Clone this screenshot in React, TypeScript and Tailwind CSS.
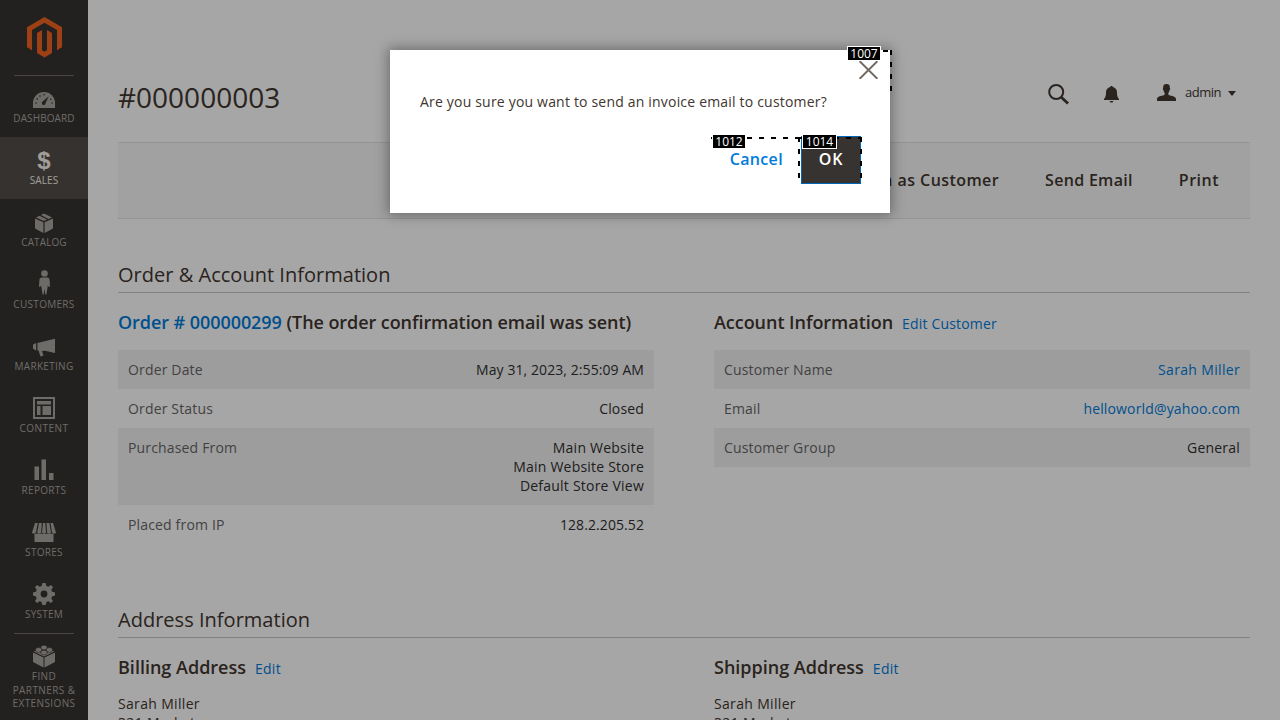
import type { ReactNode } from "react";

const iconBase = "fill-current";

const Dashboard = () => (
  <svg className={iconBase} width="22" height="16" viewBox="0 0 22 16">
    <path d="M0 16V11a11 11 0 0 1 22 0V16Z" />
    <g className="fill-[#373330]">
      <path d="M15.800 4.200 12.600 10.800A1.900 1.900 0 1 1 9.700 9.500Z" />
      <circle cx="3" cy="11" r=".8" /><circle cx="4.2" cy="6.900" r=".8" /><circle cx="7" cy="4" r=".8" />
      <circle cx="11" cy="2.800" r=".8" /><circle cx="17.800" cy="7.200" r=".8" /><circle cx="19" cy="11" r=".8" />
    </g>
  </svg>
);
const Catalog = () => (
  <svg className={iconBase} width="18" height="20" viewBox="0 0 18 20">
    <path d="M0 5.600 8.400 9.300V20L0 15.600ZM18 5.600 9.600 9.300V20L18 15.600ZM1 4.400 4.500 2.700 12 6.600 9 8ZM6 2 9 .5 17 4.400 13.500 5.900Z" />
  </svg>
);
const Person = () => (
  <svg className={iconBase} width="11" height="25" viewBox="0 0 11 25">
    <circle cx="5.500" cy="3.500" r="3.300" />
    <path d="M2.800 7.500h5.400c1.600 0 2.200 1 2.400 2.800l.4 5.700c0 1.200-1 1.500-1.500.6L8.900 15 7.500 24c-.2 1-1.100 1-1.200 0L5.500 19l-.8 5c-.1 1-1 1-1.200 0L2.100 15l-.6 1.600C1 17.500 0 17.200 0 16l.4-5.700C.6 8.500 1.200 7.500 2.800 7.500Z" />
  </svg>
);
const Marketing = () => (
  <svg className={iconBase} width="22" height="19" viewBox="0 0 22 19">
    <path d="M4.500 5 22 .8V15L12 12.800 9 13l1.500 4.500L7.500 18.500 5.500 12.500h-1ZM0 6.500 3.200 5v7.500L0 10.800Z" />
  </svg>
);
const Content = () => (
  <svg className={iconBase} width="22" height="22" viewBox="0 0 22 22">
    <path fillRule="evenodd" d="M0 0h22v22H0ZM2 2v18h18V2ZM4 4h14v3.500H4ZM4 9h3.500v9H4ZM9.500 9H18v9H9.500Z" />
  </svg>
);
const Reports = () => (
  <svg className={iconBase} width="20" height="21" viewBox="0 0 20 21">
    <path d="M.5 7.500H5V21H.5ZM7.500.5H12V21H7.500ZM15 14h4.500v7H15Z" />
  </svg>
);
const Stores = () => (
  <svg className={iconBase} width="24" height="19" viewBox="0 0 24 19">
    <path d="M3 0h2.800L4 9.500a2.200 2.200 0 0 1-4 0ZM7 0h2.800L9.200 9.500a2.200 2.200 0 0 1-4 0ZM11 0h2.300l.7 9.500a2.200 2.200 0 0 1-4 0ZM14.500 0h2.800l1.700 9.500a2.200 2.200 0 0 1-4 0ZM18.500 0H21l3 9.500a2.200 2.200 0 0 1-4 0ZM2.500 11q1.200 0 2.200-.6 2.200 1.200 4.800 0 2.500 1.200 5 0 2.400 1.200 4.800 0 1 .6 2.200.6v8h-19Z" />
  </svg>
);
const Gear = () => (
  <svg className={iconBase} width="22" height="22" viewBox="0 0 22 22">
    <path fillRule="evenodd" d="M9.400 0h3.200l.8 3 2 .8L18 2.100 20 4.200 18.300 6.700l.8 2 2.900.7v3.200l-2.900.8-.8 2 1.700 2.500-2.100 2.100-2.500-1.700-2 .8-.8 2.900H9.400l-.8-2.900-2-.8L4.100 20 2 17.900l1.700-2.500-.8-2L0 12.600V9.400l2.900-.7.800-2L2 4.200 4.100 2.100l2.500 1.700 2-.8ZM11 7.600a3.400 3.400 0 1 0 0 6.800 3.400 3.400 0 0 0 0-6.800Z" />
  </svg>
);
const Brick = () => (
  <svg className={iconBase} width="22" height="23" viewBox="0 0 22 23">
    <path d="M0 7.500l10.500 5V22.500L0 17ZM22 7.500l-10.500 5V22.500L22 17ZM.8 6.500 3 5.400 11 9.200 19 5.400l2.200 1.100L11 11.400Z" />
    <g className="stroke-[#373330]" strokeWidth=".6">
      <path d="M8 1.800a3 1.600 0 0 1 6 0v1.500a3 1.600 0 0 1-6 0Z" />
      <path d="M2.600 4.200a3 1.600 0 0 1 6 0v1.500a3 1.600 0 0 1-6 0Z" />
      <path d="M13.400 4.200a3 1.600 0 0 1 6 0v1.500a3 1.600 0 0 1-6 0Z" />
      <path d="M8 6.800a3 1.600 0 0 1 6 0v1.500a3 1.600 0 0 1-6 0Z" />
    </g>
  </svg>
);

const menu: { label: string; icon: ReactNode; active?: boolean; pad?: string; tracking?: string }[] = [
  { label: "DASHBOARD", icon: <Dashboard />, pad: "pt-[14px]", tracking: "tracking-[0.1px]" },
  { label: "SALES", icon: <span className="font-['Liberation_Sans',sans-serif] text-[24px] leading-[24px] font-bold">$</span>, active: true, tracking: "tracking-[0.1px]" },
  { label: "CATALOG", icon: <Catalog />, pad: "pt-[11px]", tracking: "tracking-[0.1px]" },
  { label: "CUSTOMERS", icon: <Person />, pad: "pt-[6px]" },
  { label: "MARKETING", icon: <Marketing /> },
  { label: "CONTENT", icon: <Content />, pad: "pt-[9px]", tracking: "tracking-[0.5px]" },
  { label: "REPORTS", icon: <Reports />, pad: "pt-[9px]" },
  { label: "STORES", icon: <Stores />, pad: "pt-[11px]" },
  { label: "SYSTEM", icon: <Gear />, pad: "pt-[10px]", tracking: "tracking-[0.2px]" },
];

function Sidebar() {
  return (
    <nav className="flex w-[88px] shrink-0 flex-col bg-[#373330] text-[#aaa6a0]">
      <div className="mx-[14px] flex h-[76px] shrink-0 justify-center border-b border-[#736963] pt-[17px]">
        <svg width="35" height="41" viewBox="0 0 35 41" className="fill-[#f26322]">
          <path d="M17.500 0 35 10.200V30.300L30 33.200V13L17.500 5.800 5 13V33.200L0 30.300V10.200Z" />
          <path d="M10 15.900 15 13V33.200L17.500 34.700 20 33.200V13L25 15.900V36.100L17.500 40.500 10 36.100Z" />
        </svg>
      </div>
      <div className="-mt-px">
        {menu.map((m) => (
          <div
            key={m.label}
            className={`flex h-[62px] flex-col items-center ${m.active ? "bg-[#524d49] text-[#f7f3eb]" : ""}`}
          >
            <div className={`flex h-[36px] shrink-0 items-center justify-center ${m.pad ?? "pt-[12px]"}`}>{m.icon}</div>
            <span className={`text-[10px] leading-[14px] ${m.tracking ?? "tracking-[0.3px]"}`}>{m.label}</span>
          </div>
        ))}
      </div>
      <div className="mx-[10px] -mt-px flex flex-col items-center pt-px">
        <div className="h-px w-[60px] bg-[#736963]" />
        <div className="pt-[11px]"><Brick /></div>
        <span className="mt-[2px] text-center text-[10px] leading-[13.500px] tracking-[0.4px]">
          FIND<br />PARTNERS &amp;<br />EXTENSIONS
        </span>
      </div>
    </nav>
  );
}

function Row({ label, shaded, link, lines, tracking = "tracking-[0.15px]" }: { label: string; shaded?: boolean; link?: boolean; lines: string[]; tracking?: string }) {
  return (
    <div className={`flex justify-between px-[10px] py-[10px] text-[14px] leading-[19px] ${shaded ? "bg-[#f2f2f2]" : ""}`}>
      <span className="tracking-[0.160px] text-[#666666]">{label}</span>
      <span className={`text-right ${tracking} ${link ? "text-[#007bdb]" : "text-[#303030]"}`}>
        {lines.map((l) => <div key={l}>{l}</div>)}
      </span>
    </div>
  );
}

function SectionTitle({ children }: { children: ReactNode }) {
  return <h2 className="h-[35px] border-b border-[#c8c6c2] text-[20px] leading-[34px] tracking-[0.020px] text-[#41362f]">{children}</h2>;
}

function Address({ title }: { title: string }) {
  return (
    <div className="flex-1">
      <div className="flex h-[24px] items-baseline leading-[24px]">
        <h3 className="text-[18px] font-semibold text-[#41362f]">{title}</h3>
        <span className="ml-[9px] text-[14px] tracking-[0.25px] text-[#007bdb]">Edit</span>
      </div>
      <div className="mt-[15px] text-[14px] leading-[19px] tracking-[0.33px] text-[#41362f]">
        Sarah Miller<br />321 Market
      </div>
    </div>
  );
}

function Modal() {
  return (
    <div className="absolute top-[50px] left-[390px] h-[163px] w-[500px] bg-white px-[30px] text-[#41362f] shadow-[0_0_12px_2px_rgba(0,0,0,0.35)]">
      <p className="pt-[42px] text-[14px] leading-[20px] tracking-[0.19px]">Are you sure you want to send an invoice email to customer?</p>
      <div className="mt-[24px] flex justify-end">
        <button className="h-[48px] pr-[18px] pb-[2px] text-[16px] font-semibold tracking-[0.36px] text-[#007bdb]">Cancel</button>
        <button className="mr-[-1px] h-[48px] w-[60px] border border-[#0067b8] bg-[#373330] pb-[2px] text-[16px] font-semibold tracking-[0.8px] text-white">OK</button>
      </div>
      <svg className="absolute top-[11px] left-[469px]" width="19" height="18" viewBox="0 0 19 18">
        <path d="M.6.2 18.400 17.800M18.400.2.6 17.800" className="stroke-[#736963]" strokeWidth="2" />
      </svg>
      <svg className="pointer-events-none absolute top-[-10px] left-[310px]" width="195" height="160" viewBox="0 0 195 160" fill="none">
        <g className="stroke-black" strokeWidth="2" strokeDasharray="5 7">
          <path d="M183 11H188M190 11H192" />
          <path d="M191 10V52" />
          <path d="M11 98H12M47 98H98" />
          <path d="M98 98H162" />
          <path d="M99 97V139" />
          <path d="M161 97V139" />
        </g>
      </svg>
      <span className="absolute top-[-4px] left-[457px] h-[15px] w-[34px] border border-white bg-black text-center text-[12px] leading-[13px] text-white">1007</span>
      <span className="absolute top-[84px] left-[322px] h-[15px] w-[34px] border border-white bg-black text-center text-[12px] leading-[13px] text-white">1012</span>
      <span className="absolute top-[84px] left-[412px] h-[15px] w-[35px] border border-white bg-black text-center text-[12px] leading-[13px] text-white">1014</span>
    </div>
  );
}

export default function App() {
  return (
    <div className="relative flex h-[720px] w-[1280px] overflow-hidden bg-white font-['Open_Sans',sans-serif]">
      <Sidebar />
      <main className="flex-1 px-[30px] pt-[71px]">
        <header className="flex h-[71px] justify-between text-[#41362f]">
          <h1 className="text-[28px] leading-[52px]">#000000003</h1>
          <div className="flex pr-[14px]">
            <svg className="mt-[13px]" width="21" height="21" viewBox="0 0 21 21" fill="none" stroke="currentColor">
              <circle cx="8.200" cy="8" r="7" strokeWidth="2" /><path d="M13 13l7 6.500" strokeWidth="2.800" />
            </svg>
            <svg className="mt-[15px] ml-[35px] fill-current" width="15" height="17" viewBox="0 0 15 17">
              <path d="M7.500 0c.8 0 1.300.5 1.300 1.100 2.800.6 4.200 2.600 4.200 5.500 0 3.200.5 4.900 2 6.400V14H0v-1c1.500-1.500 2-3.200 2-6.400 0-2.900 1.400-4.900 4.200-5.500C6.200.5 6.700 0 7.500 0ZM5.600 15h3.800c-.3 2-3.500 2-3.800 0Z" />
            </svg>
            <svg className="mt-[13px] ml-[38px] fill-current" width="19" height="17" viewBox="0 0 19 17">
              <path d="M9.500 0c2.600 0 3.600 1.500 3.300 4 .7.300.3 2-.3 2.300-.2 1.500-.8 2-1.200 2.700v1.500c1 1.500 7.700 1.300 7.700 4.500v2H0v-2c0-3.200 6.700-3 7.700-4.500V9c-.4-.7-1-1.200-1.200-2.700C5.900 6 5.500 4.300 6.200 4 5.900 1.500 6.900 0 9.500 0Z" />
            </svg>
            <span className="mt-[11px] ml-[9px] text-[13px] leading-[20px] tracking-[-0.5px]">admin</span>
            <svg className="mt-[20px] ml-[7px] fill-current" width="8" height="5" viewBox="0 0 8 5"><path d="M0 0h8L4 5Z" /></svg>
          </div>
        </header>
        <div className="flex h-[77px] items-center justify-end gap-[46px] border-y border-[#e3e3e3] bg-[#f8f8f8] pr-[31px] pb-[2px] text-[16px] font-semibold tracking-[0.3px] text-[#41362f]">
          <span className="tracking-[0.43px]">Login as Customer</span><span>Send Email</span><span className="tracking-[0.5px]">Print</span>
        </div>
        <div className="mt-[39px]"><SectionTitle>Order &amp; Account Information</SectionTitle></div>
        <div className="mt-[17px] flex gap-[60px]">
          <section className="flex-1">
            <h3 className="mb-[16px] h-[24px] text-[18px] leading-[24px] font-semibold tracking-[-0.065px] whitespace-nowrap text-[#41362f]">
              <span className="text-[#007bdb]">Order # 000000299</span> (The order confirmation email was sent)
            </h3>
            <Row label="Order Date" shaded tracking="tracking-[0.08px]" lines={["May 31, 2023, 2:55:09 AM"]} />
            <Row label="Order Status" lines={["Closed"]} />
            <Row label="Purchased From" shaded tracking="tracking-[0.22px]" lines={["Main Website", "Main Website Store", "Default Store View"]} />
            <Row label="Placed from IP" tracking="tracking-[0.08px]" lines={["128.2.205.52"]} />
          </section>
          <section className="flex-1">
            <div className="mb-[16px] flex h-[24px] items-baseline leading-[24px]">
              <h3 className="text-[18px] font-semibold tracking-[-0.040px] text-[#41362f]">Account Information</h3>
              <span className="ml-[9px] text-[14px] tracking-[0.18px] text-[#007bdb]">Edit Customer</span>
            </div>
            <Row label="Customer Name" shaded link tracking="tracking-[0.33px]" lines={["Sarah Miller"]} />
            <Row label="Email" link lines={["helloworld@yahoo.com"]} />
            <Row label="Customer Group" shaded tracking="tracking-[0.2px]" lines={["General"]} />
          </section>
        </div>
        <div className="mt-[59px]"><SectionTitle>Address Information</SectionTitle></div>
        <div className="mt-[17px] flex gap-[60px]">
          <Address title="Billing Address" /><Address title="Shipping Address" />
        </div>
      </main>
      <div className="absolute inset-0 bg-black/35" />
      <Modal />
    </div>
  );
}
